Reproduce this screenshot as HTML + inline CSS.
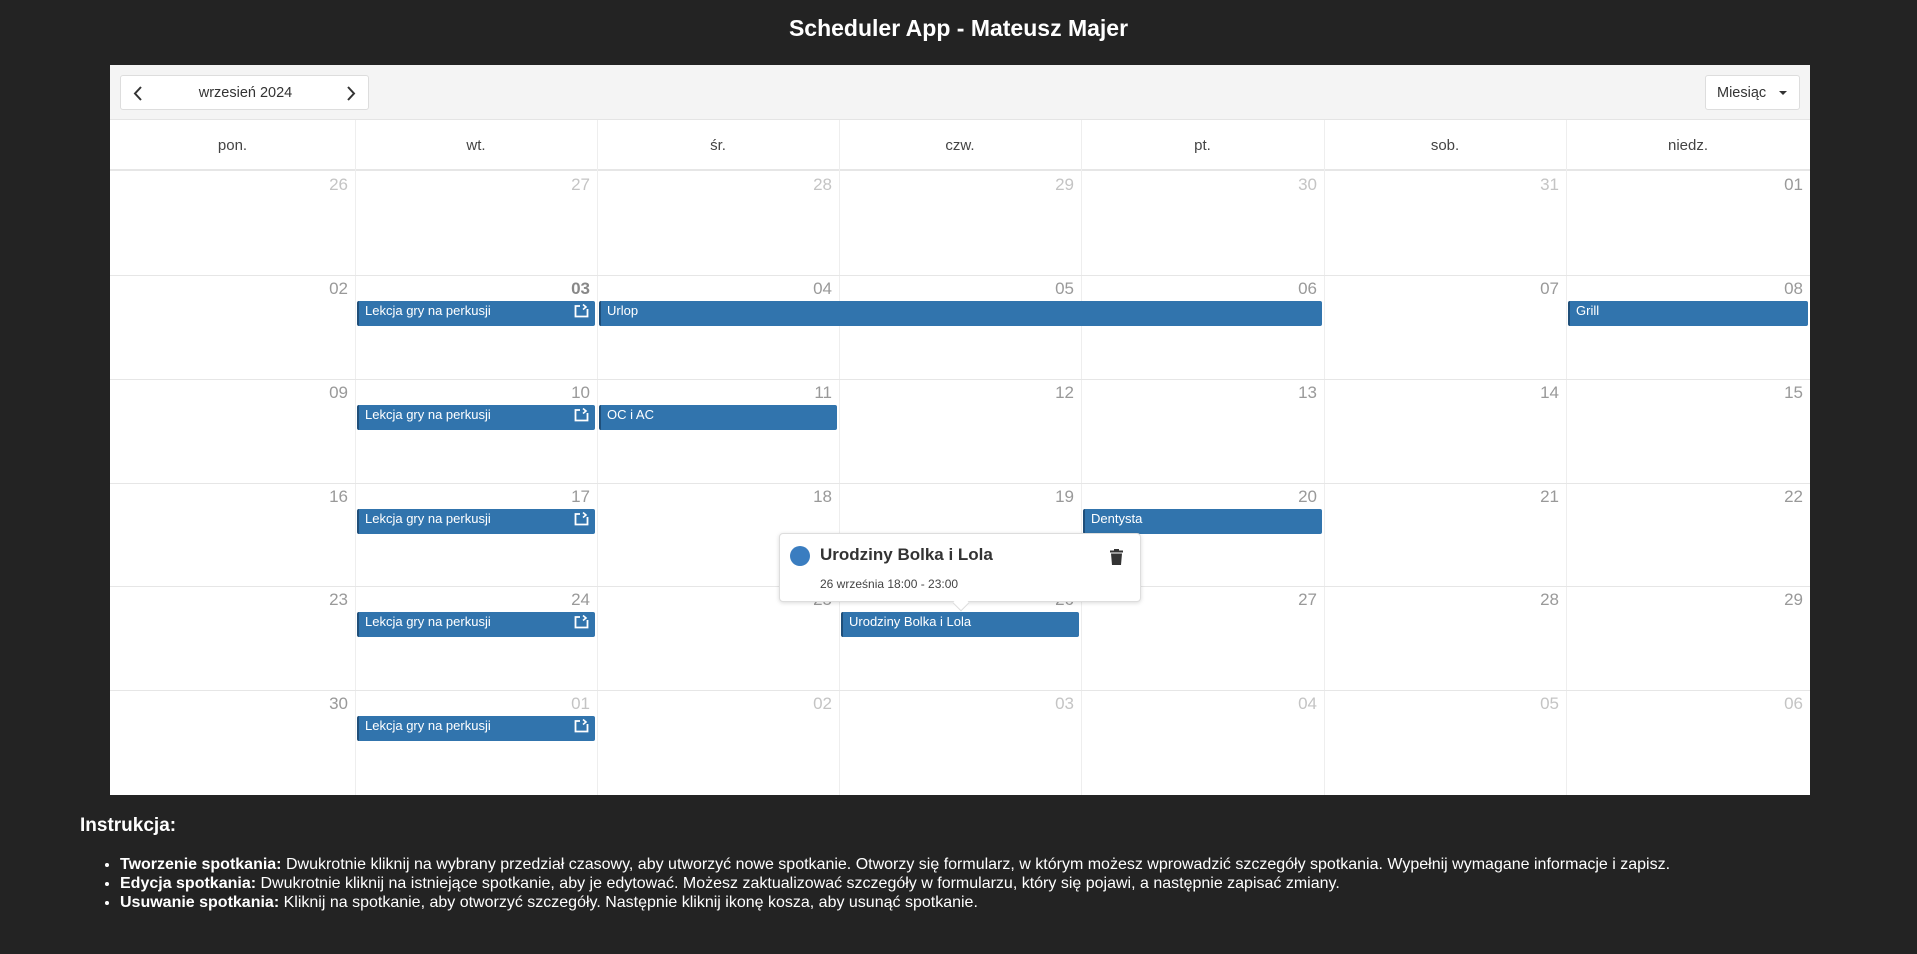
<!DOCTYPE html>
<html><head><meta charset="utf-8"><style>
*{box-sizing:border-box;margin:0;padding:0}
body{width:1917px;height:954px;background:#232323;font-family:"Liberation Sans",Arial,sans-serif;position:relative;overflow:hidden}
.t{position:absolute;left:0;width:1917px;top:15px;text-align:center;color:#fff;font-size:23px;font-weight:bold}
.cal{position:absolute;left:110px;top:65px;width:1700px;height:730px;background:#fff}
.tb{position:absolute;left:0;top:0;width:1700px;height:55px;background:#f4f4f4;border-bottom:1px solid #e4e4e4}
.btn{position:absolute;background:#fff;border:1px solid #ddd;border-radius:3px;font-size:15px;color:#333}
.a{position:absolute;}
.hd{position:absolute;top:55px;height:51px;border-bottom:2px solid #e6e6e6;font-size:15px;color:#444;text-align:center;line-height:51px}
.vl{position:absolute;width:1px;background:#eee}
.hl{position:absolute;left:0;width:1700px;height:1px;background:#e6e6e6}
.dn{position:absolute;font-size:17px;text-align:right;width:60px}
.ev{position:absolute;height:25px;background:#3174ad;border-left:2px solid #1f4f7a;color:#fff;font-size:13px;padding-left:6px;line-height:20px;border-radius:2px}
.ic{position:absolute;right:6px;top:3px}
.pop{position:absolute;left:779px;top:533px;width:362px;height:69px;background:#fff;border:1px solid #ddd;border-radius:4px;box-shadow:0 1px 4px rgba(0,0,0,.15)}
.ins{position:absolute;left:80px;top:815px;color:#fff}
.ins h3{font-size:19px;margin-bottom:18px}
.ins ul{margin-left:40px;font-size:16px;line-height:19px}
</style></head><body>
<div class="t">Scheduler App - Mateusz Majer</div>
<div class="cal">
<div class="tb">
 <div class="btn" style="left:10px;top:10px;width:249px;height:35px">
  <svg class="a" style="left:12px;top:10px" width="10" height="15" viewBox="0 0 10 15"><path d="M8 1L2 7.5L8 14" stroke="#333" stroke-width="2" fill="none"/></svg>
  <span class="a" style="left:0;width:249px;text-align:center;top:9px;font-size:14.5px">wrzesień 2024</span>
  <svg class="a" style="left:225px;top:10px" width="10" height="15" viewBox="0 0 10 15"><path d="M2 1L8 7.5L2 14" stroke="#333" stroke-width="2" fill="none"/></svg>
 </div>
 <div class="btn" style="left:1595px;top:10px;width:95px;height:35px">
  <span class="a" style="left:11px;top:9px;font-size:14.5px">Miesiąc</span>
  <svg class="a" style="left:73px;top:15px" width="8" height="5"><path d="M0 0H8L4 4Z" fill="#333"/></svg>
 </div>
</div>
<div class="hd" style="left:0;width:245px">pon.</div>
<div class="hd" style="left:245px;width:242px">wt.</div>
<div class="hd" style="left:487px;width:242px">śr.</div>
<div class="hd" style="left:729px;width:242px">czw.</div>
<div class="hd" style="left:971px;width:243px">pt.</div>
<div class="hd" style="left:1214px;width:242px">sob.</div>
<div class="hd" style="left:1456px;width:244px">niedz.</div>
<div class="vl" style="left:245px;top:55px;height:675px"></div>
<div class="vl" style="left:487px;top:55px;height:675px"></div>
<div class="vl" style="left:729px;top:55px;height:675px"></div>
<div class="vl" style="left:971px;top:55px;height:675px"></div>
<div class="vl" style="left:1214px;top:55px;height:675px"></div>
<div class="vl" style="left:1456px;top:55px;height:675px"></div>
<div class="hl" style="top:210px"></div>
<div class="hl" style="top:314px"></div>
<div class="hl" style="top:418px"></div>
<div class="hl" style="top:521px"></div>
<div class="hl" style="top:625px"></div>
</div>
<div id="nums"></div>
<div id="evs"></div>
<script>
var xs=[110,355,597,839,1081,1324,1566,1810],ys=[171,275,379,483,586,690,795];
var days=[["26","27","28","29","30","31","01"],["02","03","04","05","06","07","08"],["09","10","11","12","13","14","15"],["16","17","18","19","20","21","22"],["23","24","25","26","27","28","29"],["30","01","02","03","04","05","06"]];
var h="";
for(var r=0;r<6;r++)for(var c=0;c<7;c++){
 var off=(r==0&&c<6)||(r==5&&c>0);
 var col=off?"#c4c4c4":"#999";var b=(r==1&&c==1)?"font-weight:bold;color:#888;":"";
 h+='<div class="dn" style="left:'+(xs[c+1]-67)+'px;top:'+(ys[r]+4)+'px;color:'+col+';'+b+'">'+days[r][c]+'</div>';
}
document.getElementById("nums").innerHTML=h;
var ic='<svg class="ic" width="15" height="14" viewBox="0 0 15 14"><path d="M6 2H1.5V12.5H13.5V5" stroke="#fff" stroke-width="1.8" fill="none"/><path d="M9 0.5L12 3L9 5.5" stroke="#fff" stroke-width="1.6" fill="none"/></svg>';
var E=[[1,1,1,"Lekcja gry na perkusji",1],[1,2,4,"Urlop",0],[1,6,6,"Grill",0],[2,1,1,"Lekcja gry na perkusji",1],[2,2,2,"OC i AC",0],[3,1,1,"Lekcja gry na perkusji",1],[3,4,4,"Dentysta",0],[4,1,1,"Lekcja gry na perkusji",1],[4,3,3,"Urodziny Bolka i Lola",0],[5,1,1,"Lekcja gry na perkusji",1]];
h="";
E.forEach(function(e){var l=xs[e[1]]+2,w=xs[e[2]+1]-l-2;
h+='<div class="ev" style="left:'+l+'px;top:'+(ys[e[0]]+26)+'px;width:'+w+'px">'+e[3]+(e[4]?ic:'')+'</div>';});
document.getElementById("evs").innerHTML=h;
</script>
<div class="pop">
 <div class="a" style="left:10px;top:12px;width:20px;height:20px;border-radius:50%;background:#3a7dc0"></div>
 <div class="a" style="left:40px;top:11px;font-size:17px;font-weight:bold;color:#333">Urodziny Bolka i Lola</div>
 <svg class="a" style="left:330px;top:15px" width="13" height="16" viewBox="0 0 13 16"><path d="M4 0H9V1.5H13V3.5H0V1.5H4Z M1 4.5H12L11 16H2Z" fill="#333"/></svg>
 <div class="a" style="left:40px;top:43px;font-size:12px;color:#444">26 września 18:00 - 23:00</div>
 <div class="a" style="left:175px;top:63px;width:12px;height:12px;background:#fff;border-right:1px solid #ddd;border-bottom:1px solid #ddd;transform:rotate(45deg)"></div>
</div>
<div class="ins">
<h3>Instrukcja:</h3>
<ul>
<li><b>Tworzenie spotkania:</b> Dwukrotnie kliknij na wybrany przedział czasowy, aby utworzyć nowe spotkanie. Otworzy się formularz, w którym możesz wprowadzić szczegóły spotkania. Wypełnij wymagane informacje i zapisz.</li>
<li><b>Edycja spotkania:</b> Dwukrotnie kliknij na istniejące spotkanie, aby je edytować. Możesz zaktualizować szczegóły w formularzu, który się pojawi, a następnie zapisać zmiany.</li>
<li><b>Usuwanie spotkania:</b> Kliknij na spotkanie, aby otworzyć szczegóły. Następnie kliknij ikonę kosza, aby usunąć spotkanie.</li>
</ul>
</div>
</body></html>
